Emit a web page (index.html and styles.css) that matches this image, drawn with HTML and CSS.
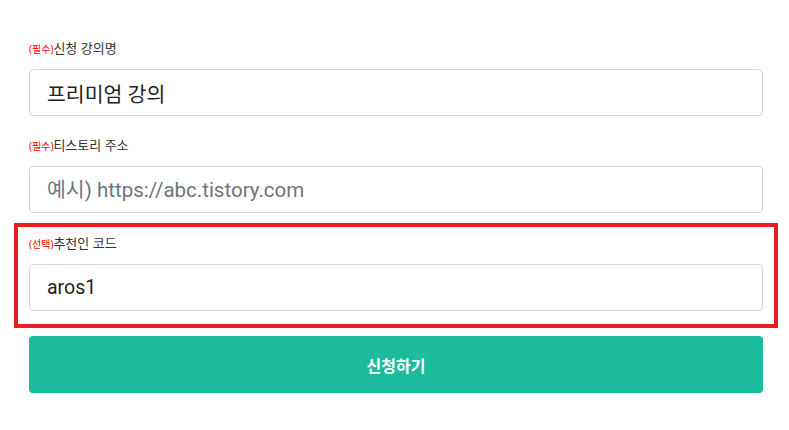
FILE: index.html
```html
<!DOCTYPE html>
<html lang="ko">
<head>
  <meta charset="UTF-8">
  <meta name="viewport" content="width=device-width, initial-scale=1.0">
  <title>강의 신청</title>
  <link rel="stylesheet" href="styles.css">
</head>
<body>
  <form class="apply-form">
    <div class="field">
      <label class="field-label"><span class="tag">(필수)</span>신청 강의명</label>
      <input type="text" class="field-input" value="프리미엄 강의">
    </div>

    <div class="field">
      <label class="field-label"><span class="tag">(필수)</span>티스토리 주소</label>
      <input type="text" class="field-input" placeholder="예시) https://abc.tistory.com">
    </div>

    <div class="field field-highlight">
      <label class="field-label"><span class="tag">(선택)</span>추천인 코드</label>
      <input type="text" class="field-input code" value="aros1">
    </div>

    <button type="button" class="submit-btn">신청하기</button>
  </form>
</body>
</html>
```

FILE: styles.css
```css
body { margin: 0; background: #fff; font-family: "Noto Sans", "Noto Sans CJK KR", sans-serif; color: #333; }
.apply-form { width: 734px; margin-left: 29px; padding-top: 38px; }
.field { margin-bottom: 19px; }
.field-label { display: block; height: 20px; line-height: 20px; margin-bottom: 11px; font-size: 13px; color: #333; }
.tag { font-size: 10px; color: #f00; }
.field-input { display: block; box-sizing: border-box; width: 100%; height: 47px; padding: 0 17px; border: 1px solid #d3d6da; border-radius: 4px; font-family: Roboto, "Noto Sans CJK KR", sans-serif; font-size: 20.5px; color: #222; outline: none; }
.field-input::placeholder { color: #6c757d; }
.field-input.code { font-size: 19.5px; }
.field-highlight { margin: -9px -15px 8px; padding: 6px 11px 13px; border: 4px solid #ed1c24; }
.submit-btn { display: block; width: 100%; height: 57px; border: none; border-radius: 4px; background: #1bbc9b; color: #fff; font-family: "Noto Sans CJK KR", sans-serif; font-size: 16px; font-weight: bold; cursor: pointer; }
```
